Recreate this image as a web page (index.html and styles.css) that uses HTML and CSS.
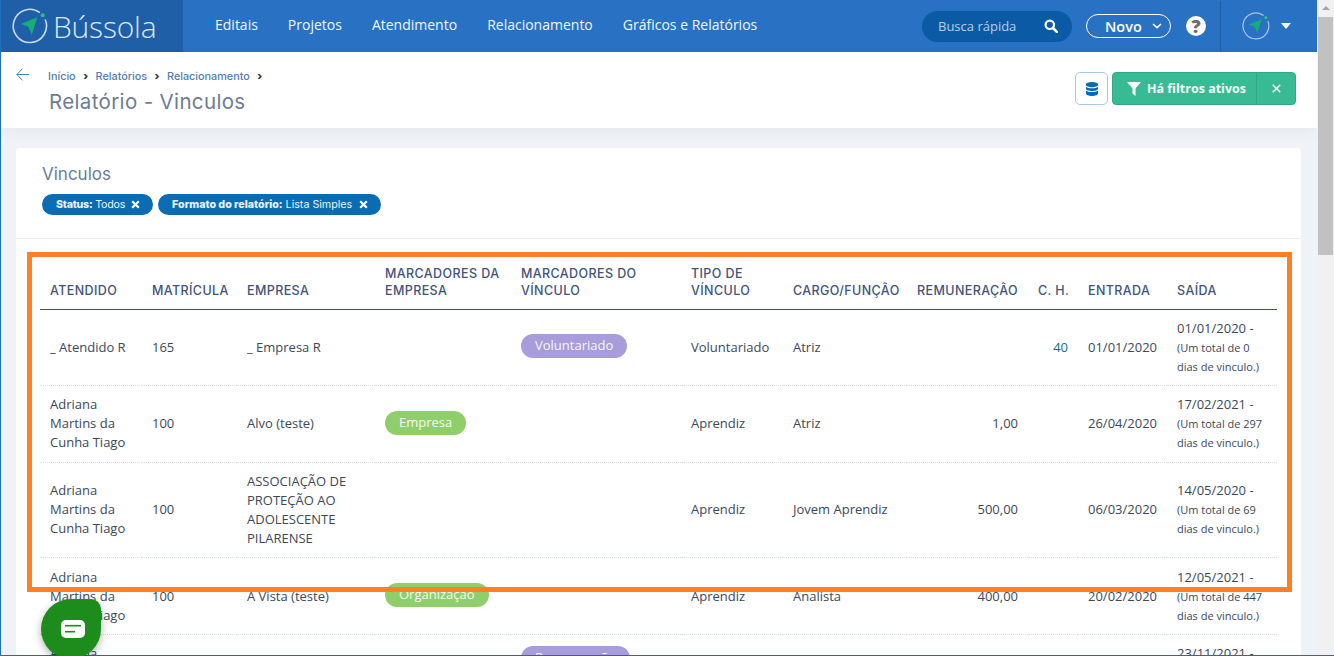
FILE: index.html
```html
<!DOCTYPE html>
<html lang="pt-BR">
<head>
<meta charset="utf-8">
<title>Relatório - Vinculos</title>
<link rel="stylesheet" href="styles.css">
</head>
<body>
<div class="frame">
  <div class="app">
    <header class="topbar">
      <a class="brand">
        <svg class="brand-icon" width="36" height="36" viewBox="0 0 36 36"><path d="M27.800 4.600A16.600 16.600 0 1 0 33.200 11.500" fill="none" stroke="#c9d9ec" stroke-width="1.600"/><circle cx="30.700" cy="7.200" r="2" fill="#2fbf8a"/><path d="M8.700 16 L25.300 9.300 L19.700 27 L16.300 18.700Z" fill="#17ad78"/></svg>
        <span class="brand-name">Bússola</span>
      </a>
      <nav class="nav">
        <a>Editais</a><a>Projetos</a><a>Atendimento</a><a>Relacionamento</a><a>Gráficos e Relatórios</a>
      </nav>
      <div class="search">
        <span>Busca rápida</span>
        <svg width="14" height="14" viewBox="0 0 14 14"><circle cx="5.800" cy="5.800" r="4.200" fill="none" stroke="#fff" stroke-width="2.200"/><path d="M9 9l3.800 3.800" stroke="#fff" stroke-width="2.600" stroke-linecap="round"/></svg>
      </div>
      <button class="new-btn">Novo<svg width="10" height="6" viewBox="0 0 10 6"><path d="M1 1l4 3.600L9 1" fill="none" stroke="#fff" stroke-width="1.600"/></svg></button>
      <span class="help">?</span>
      <div class="user">
        <svg width="28" height="28" viewBox="0 0 36 36"><path d="M27.800 4.600A16.600 16.600 0 1 0 33.200 11.500" fill="none" stroke="#a9c4e4" stroke-width="1.600"/><circle cx="30.700" cy="7.200" r="2" fill="#2fbf8a"/><path d="M8.700 16 L25.300 9.300 L19.700 27 L16.300 18.700Z" fill="#17ad78"/></svg>
        <span class="caret"></span>
      </div>
    </header>
    <section class="subheader">
      <svg class="back" width="13" height="13" viewBox="0 0 13 13"><path d="M13 6.500H.8M6.500.6L.8 6.500l5.700 5.900" fill="none" stroke="#3d85c6" stroke-width="1"/></svg>
      <div class="crumbs-wrap">
        <div class="crumbs"><a>Início</a><i>›</i><a>Relatórios</a><i>›</i><a>Relacionamento</a><i>›</i></div>
        <h1>Relatório - Vinculos</h1>
      </div>
      <div class="actions">
        <button class="db-btn">
          <svg width="12" height="14" viewBox="0 0 12 14"><path d="M0 2.300C0 1 2.700 0 6 0s6 1 6 2.300v.7C12 4.300 9.300 5.200 6 5.200S0 4.300 0 3zM0 4.700C1.200 5.700 3.500 6.200 6 6.200s4.800-.5 6-1.500v2C12 8 9.300 9 6 9S0 8 0 6.700zM0 8.500C1.200 9.500 3.500 10 6 10s4.800-.5 6-1.500v3C12 12.900 9.300 14 6 14S0 12.900 0 11.500z" fill="#0b68b3"/></svg>
        </button>
        <div class="filters">
          <span class="filters-main">
            <svg width="14" height="14" viewBox="0 0 14 14"><path d="M0 0h14L8.500 6.500V14L5.500 11.500V6.500z" fill="#fff"/></svg>
            Há filtros ativos
          </span>
          <span class="filters-close"><svg width="9" height="9" viewBox="0 0 9 9"><path d="M.7.7l7.600 7.600M8.300.7L.7 8.300" stroke="#f4fbf8" stroke-width="1.500"/></svg></span>
        </div>
      </div>
    </section>
    <main class="content">
      <section class="card">
        <div class="card-head">
          <h2>Vinculos</h2>
          <div class="chips">
            <span class="chip chip-short"><b>Status:</b> Todos<svg width="9" height="9" viewBox="0 0 9 9"><path d="M1.200 1.200l6.600 6.600M7.800 1.200L1.200 7.800" stroke="#fff" stroke-width="2.200"/></svg></span>
            <span class="chip"><b>Formato do relatório:</b> Lista Simples<svg width="9" height="9" viewBox="0 0 9 9"><path d="M1.200 1.200l6.600 6.600M7.800 1.200L1.200 7.800" stroke="#fff" stroke-width="2.200"/></svg></span>
          </div>
        </div>
        <div class="table-wrap">
          <table>
            <colgroup>
              <col class="c1"><col class="c2"><col class="c3"><col class="c4"><col class="c5"><col class="c6"><col class="c7"><col class="c8"><col class="c9"><col class="c10"><col class="c11">
            </colgroup>
            <thead>
              <tr><th>ATENDIDO</th><th>MATRÍCULA</th><th>EMPRESA</th><th>MARCADORES DA EMPRESA</th><th>MARCADORES DO VÍNCULO</th><th>TIPO DE VÍNCULO</th><th>CARGO/FUNÇÃO</th><th>REMUNERAÇÃO</th><th class="nowrap">C. H.</th><th>ENTRADA</th><th>SAÍDA</th></tr>
            </thead>
            <tbody>
              <tr>
                <td>_ Atendido R</td><td>165</td><td>_ Empresa R</td><td></td><td><span class="tag purple">Voluntariado</span></td><td>Voluntariado</td><td>Atriz</td><td class="num"></td><td class="num link">40</td><td>01/01/2020</td>
                <td>01/01/2020 -<small>(Um total de 0 dias de vinculo.)</small></td>
              </tr>
              <tr>
                <td>Adriana Martins da Cunha Tiago</td><td>100</td><td>Alvo (teste)</td><td><span class="tag green">Empresa</span></td><td></td><td>Aprendiz</td><td>Atriz</td><td class="num">1,00</td><td class="num"></td><td>26/04/2020</td>
                <td>17/02/2021 -<small>(Um total de 297 dias de vinculo.)</small></td>
              </tr>
              <tr>
                <td>Adriana Martins da Cunha Tiago</td><td>100</td><td>ASSOCIAÇÃO DE PROTEÇÃO AO ADOLESCENTE PILARENSE</td><td></td><td></td><td>Aprendiz</td><td>Jovem Aprendiz</td><td class="num">500,00</td><td class="num"></td><td>06/03/2020</td>
                <td>14/05/2020 -<small>(Um total de 69 dias de vinculo.)</small></td>
              </tr>
              <tr>
                <td>Adriana Martins da Cunha Tiago</td><td>100</td><td>A Vista (teste)</td><td><span class="tag green">Organização</span></td><td></td><td>Aprendiz</td><td>Analista</td><td class="num">400,00</td><td class="num"></td><td>20/02/2020</td>
                <td>12/05/2021 -<small>(Um total de 447 dias de vinculo.)</small></td>
              </tr>
              <tr>
                <td>Adriana Martins da Cunha Tiago</td><td></td><td></td><td></td><td><span class="tag purple">Programação</span> <span class="tag purple">Voluntariado</span></td><td></td><td></td><td class="num"></td><td class="num"></td><td></td>
                <td>23/11/2021 -<small>(Um total de 0 dias de vinculo.)</small></td>
              </tr>
            </tbody>
          </table>
        </div>
      </section>
    </main>
  </div>
  <div class="scrollbar">
    <span class="arrow up"></span>
    <span class="thumb"></span>
  </div>
</div>
<div class="highlight"></div>
<button class="fab" aria-label="Chat">
  <svg width="24" height="18" viewBox="0 0 24 18"><rect width="24" height="18" rx="5" fill="#fff"/><path d="M4 5.700h16" stroke="#1d8c1d" stroke-width="1.600"/><path d="M4 11.700h10" stroke="#1d8c1d" stroke-width="1.600"/></svg>
</button>
</body>
</html>
```
FILE: styles.css
```css
* { box-sizing: border-box; }
html, body { margin: 0; height: 656px; overflow: hidden; }
body { font-family: "Open Sans", "Liberation Sans", sans-serif; color: #3c4858; background: #eff3f7; position: relative; }
.frame { display: flex; height: 656px; border-bottom: 1px solid #1f6bb5; border-left: 1px solid #1f6fbf; }
.app { flex: 1; min-width: 0; overflow: hidden; }

.topbar { display: flex; align-items: center; height: 52px; background: #2871c3; color: #fff; }
.brand { display: flex; align-items: center; width: 182px; height: 52px; background: #1f5fa8; padding-left: 11px; gap: 5px; }
.brand-icon { flex: none; }
.brand-name { font-size: 30px; font-weight: 300; color: #dce7f3; letter-spacing: -.2px; }
.nav { display: flex; gap: 30px; margin: -4px 0 0 32px; font-size: 14px; color: #f2f6fb; }
.search { display: flex; align-items: center; justify-content: space-between; width: 150px; height: 31px; margin-left: auto; padding: 0 14px 0 16px; border-radius: 16px; background: #0b5aa6; font-size: 13px; color: #b7cfe8; }
.new-btn { display: flex; align-items: center; gap: 10px; width: 85px; height: 24px; margin-left: 14px; padding: 0 0 0 18px; border: 1px solid #fff; border-radius: 12px; background: transparent; color: #fff; font: 600 14.500px "Open Sans", sans-serif; }
.help { display: flex; align-items: center; justify-content: center; width: 20px; height: 20px; margin-left: 15px; border-radius: 50%; background: #fff; color: #6b6b6b; font-size: 18px; font-weight: 800; }
.user { display: flex; align-items: center; gap: 11px; width: 97px; height: 51px; margin-left: 14px; padding-left: 21px; border-left: 1px solid #1f5fa8; }
.caret { width: 0; height: 0; border-left: 5.500px solid transparent; border-right: 5.500px solid transparent; border-top: 6px solid #fff; }

.subheader { display: flex; height: 76px; background: #fff; box-shadow: 0 4px 12px rgba(60, 80, 110, .06); position: relative; padding: 16px 21px 0 15px; }
.back { flex: none; }
.crumbs-wrap { margin: 1px 0 0 19px; }
.crumbs { display: flex; align-items: center; height: 14px; font-size: 10.800px; font-family: "Inter", sans-serif; font-weight: 500; color: #4f80ad; }
.crumbs i { margin: 0 7.500px; font-style: normal; font-weight: 800; color: #333; font-size: 11px; line-height: 12px; }
h1 { margin: 7px 0 0 1px; font: 400 20.500px/24px "Inter", sans-serif; color: #6c7c94; letter-spacing: .35px; }
.actions { display: flex; gap: 4px; margin-left: auto; margin-top: 4px; }
.db-btn { display: flex; align-items: center; justify-content: center; width: 33px; height: 33px; padding: 0; border: 1px solid #a7cbe5; border-radius: 5px; background: #fff; }
.filters { display: flex; height: 33px; border: 1px solid #31a883; border-radius: 4px; background: #38bb94; color: #f4fbf8; }
.filters-main { display: flex; align-items: center; gap: 6px; width: 144px; padding-left: 14px; font-size: 12.500px; font-weight: 700; border-right: 1px solid #31a883; }
.filters-close { display: flex; align-items: center; justify-content: center; width: 38px; }

.content { padding: 20px 16px 0 15px; }
.card { background: #fff; border-radius: 4px; }
.card-head { height: 91px; padding: 16px 26px 0; border-bottom: 1px solid #e9eef3; }
h2 { margin: 0; font: 400 17px/21px "Inter", sans-serif; color: #6c7c94; }
.chips { display: flex; gap: 5px; margin-top: 9px; }
.chip { display: flex; align-items: center; height: 21px; padding: 0 13px 0 14px; border-radius: 11px; background: #0b6cb3; color: #eaf3fa; font-size: 10.700px; font-family: "Inter", sans-serif; white-space: pre; }
.chip-short { letter-spacing: -.25px; }
.chip b { font-weight: 800; }
.chip svg { margin-left: 7px; }
.chip-short svg { margin-left: 6px; }

.table-wrap { padding: 17px 24px 0; }
table { width: 1237px; table-layout: fixed; border-collapse: collapse; font-size: 13px; line-height: 19px; color: #3c4858; }
.c1 { width: 102px; } .c2 { width: 95px; } .c3 { width: 138px; } .c4 { width: 136px; } .c5 { width: 170px; } .c6 { width: 102px; } .c7 { width: 124px; } .c8 { width: 121px; } .c9 { width: 50px; } .c10 { width: 89px; } .c11 { width: 110px; }
th { padding: 0 10px 10px; text-align: left; vertical-align: bottom; font: 500 12.500px/17px "Inter", sans-serif; color: #3f5478; border-bottom: 1px solid #3f5478; letter-spacing: .4px; height: 53px; white-space: normal; }
.nowrap { white-space: nowrap; }
td { padding: 9.300px 10px; vertical-align: middle; border-bottom: 1px dotted #d9dee5; }
td small { display: block; font-size: 11px; }
.num { text-align: right; }
.link { color: #1a6a8a; }
.tag { display: inline-block; position: relative; top: -1px; padding: 0 14px; height: 24px; line-height: 23px; border-radius: 12px; color: #f5f8f2; font-size: 13px; vertical-align: top; }
.tag + .tag { margin-top: 3px; }
.purple { background: #a99cdb; }
.green { background: #8fcf6b; }

.scrollbar { flex: none; width: 17px; background: #f1f1f1; position: relative; }
.thumb { display: block; position: absolute; top: 17px; left: 1px; width: 15px; height: 238px; background: #c1c1c1; }
.arrow.up { position: absolute; top: 6px; left: 5px; width: 0; height: 0; border-left: 4px solid transparent; border-right: 4px solid transparent; border-bottom: 4px solid #a3a3a3; }

.highlight { position: absolute; left: 27px; top: 252px; width: 1265px; height: 340px; border: 5px solid #ff7f27; pointer-events: none; }
.fab { position: absolute; left: 41px; top: 599px; display: flex; align-items: center; justify-content: center; width: 60px; height: 60px; padding: 0 0 0 3px; border: 0; border-radius: 50% 10px 50% 50%; background: #1d8c1d; box-shadow: 0 3px 8px rgba(0, 0, 0, .3); }
```
